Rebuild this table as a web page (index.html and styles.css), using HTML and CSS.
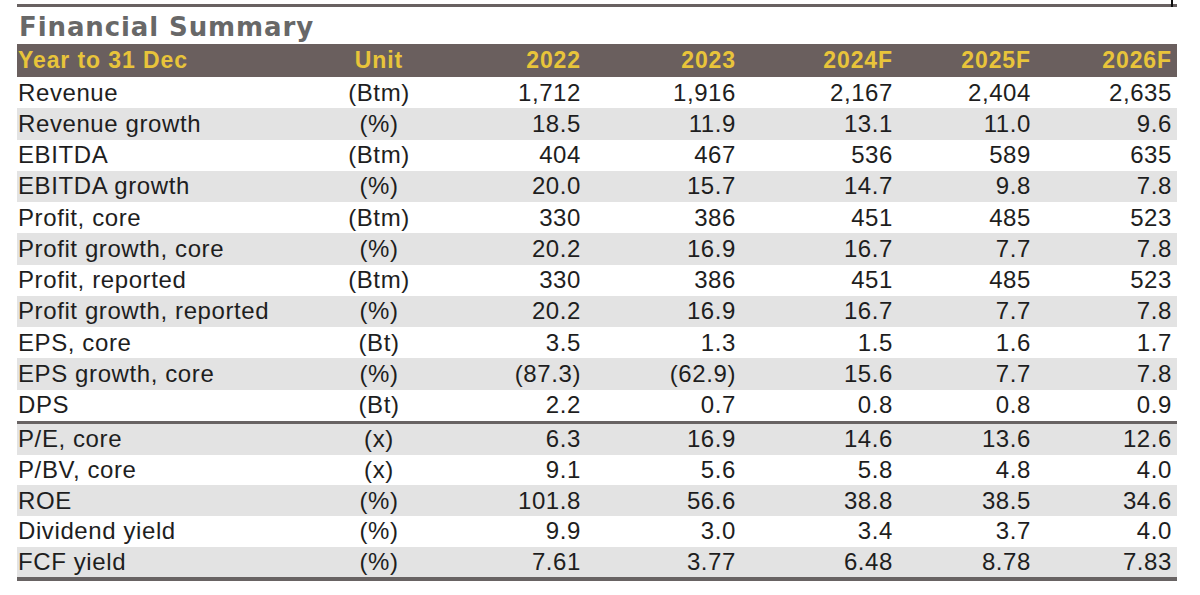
FILE: index.html
```html
<!DOCTYPE html>
<html lang="en">
<head>
<meta charset="utf-8">
<title>Financial Summary</title>
<link rel="stylesheet" href="styles.css">
</head>
<body>
<div class="sheet">
  <div class="topline"><span class="tick"></span></div>
  <div class="title">Financial Summary</div>
  <div class="row head">
    <div class="c-label">Year to 31 Dec</div>
    <div class="c-unit">Unit</div>
    <div class="c-num">2022</div>
    <div class="c-num">2023</div>
    <div class="c-num">2024F</div>
    <div class="c-num">2025F</div>
    <div class="c-num">2026F</div>
  </div>
  <div class="group g1">
    <div class="row"><div class="c-label">Revenue</div><div class="c-unit">(Btm)</div><div class="c-num">1,712</div><div class="c-num">1,916</div><div class="c-num">2,167</div><div class="c-num">2,404</div><div class="c-num">2,635</div></div>
    <div class="row alt"><div class="c-label">Revenue growth</div><div class="c-unit">(%)</div><div class="c-num">18.5</div><div class="c-num">11.9</div><div class="c-num">13.1</div><div class="c-num">11.0</div><div class="c-num">9.6</div></div>
    <div class="row"><div class="c-label">EBITDA</div><div class="c-unit">(Btm)</div><div class="c-num">404</div><div class="c-num">467</div><div class="c-num">536</div><div class="c-num">589</div><div class="c-num">635</div></div>
    <div class="row alt"><div class="c-label">EBITDA growth</div><div class="c-unit">(%)</div><div class="c-num">20.0</div><div class="c-num">15.7</div><div class="c-num">14.7</div><div class="c-num">9.8</div><div class="c-num">7.8</div></div>
    <div class="row"><div class="c-label">Profit, core</div><div class="c-unit">(Btm)</div><div class="c-num">330</div><div class="c-num">386</div><div class="c-num">451</div><div class="c-num">485</div><div class="c-num">523</div></div>
    <div class="row alt"><div class="c-label">Profit growth, core</div><div class="c-unit">(%)</div><div class="c-num">20.2</div><div class="c-num">16.9</div><div class="c-num">16.7</div><div class="c-num">7.7</div><div class="c-num">7.8</div></div>
    <div class="row"><div class="c-label">Profit, reported</div><div class="c-unit">(Btm)</div><div class="c-num">330</div><div class="c-num">386</div><div class="c-num">451</div><div class="c-num">485</div><div class="c-num">523</div></div>
    <div class="row alt"><div class="c-label">Profit growth, reported</div><div class="c-unit">(%)</div><div class="c-num">20.2</div><div class="c-num">16.9</div><div class="c-num">16.7</div><div class="c-num">7.7</div><div class="c-num">7.8</div></div>
    <div class="row"><div class="c-label">EPS, core</div><div class="c-unit">(Bt)</div><div class="c-num">3.5</div><div class="c-num">1.3</div><div class="c-num">1.5</div><div class="c-num">1.6</div><div class="c-num">1.7</div></div>
    <div class="row alt"><div class="c-label">EPS growth, core</div><div class="c-unit">(%)</div><div class="c-num">(87.3)</div><div class="c-num">(62.9)</div><div class="c-num">15.6</div><div class="c-num">7.7</div><div class="c-num">7.8</div></div>
    <div class="row"><div class="c-label">DPS</div><div class="c-unit">(Bt)</div><div class="c-num">2.2</div><div class="c-num">0.7</div><div class="c-num">0.8</div><div class="c-num">0.8</div><div class="c-num">0.9</div></div>
  </div>
  <div class="group g2">
    <div class="row alt"><div class="c-label">P/E, core</div><div class="c-unit">(x)</div><div class="c-num">6.3</div><div class="c-num">16.9</div><div class="c-num">14.6</div><div class="c-num">13.6</div><div class="c-num">12.6</div></div>
    <div class="row"><div class="c-label">P/BV, core</div><div class="c-unit">(x)</div><div class="c-num">9.1</div><div class="c-num">5.6</div><div class="c-num">5.8</div><div class="c-num">4.8</div><div class="c-num">4.0</div></div>
    <div class="row alt"><div class="c-label">ROE</div><div class="c-unit">(%)</div><div class="c-num">101.8</div><div class="c-num">56.6</div><div class="c-num">38.8</div><div class="c-num">38.5</div><div class="c-num">34.6</div></div>
    <div class="row"><div class="c-label">Dividend yield</div><div class="c-unit">(%)</div><div class="c-num">9.9</div><div class="c-num">3.0</div><div class="c-num">3.4</div><div class="c-num">3.7</div><div class="c-num">4.0</div></div>
    <div class="row alt"><div class="c-label">FCF yield</div><div class="c-unit">(%)</div><div class="c-num">7.61</div><div class="c-num">3.77</div><div class="c-num">6.48</div><div class="c-num">8.78</div><div class="c-num">7.83</div></div>
  </div>
</div>
</body>
</html>
```
FILE: styles.css
```css
html, body {
  margin: 0;
  padding: 0;
  background: #ffffff;
}

.sheet {
  position: relative;
  margin-left: 17px;
  width: 1160px;
  padding-top: 4px;
  font-family: "Liberation Sans", Arial, sans-serif;
}

.topline {
  position: relative;
  height: 3px;
  background: #686161;
}

.tick {
  position: absolute;
  right: 4px;
  top: -4px;
  width: 2px;
  height: 7px;
  background: #111111;
}

.title {
  height: 37px;
  box-sizing: border-box;
  padding-top: 3px;
  padding-left: 2px;
  line-height: 34px;
  font-family: "DejaVu Sans", Verdana, sans-serif;
  font-weight: bold;
  font-size: 26px;
  letter-spacing: 0.9px;
  color: #686868;
}

.row {
  display: grid;
  grid-template-columns: 303px 118px 148px 155px 157px 138px 141px;
  align-items: center;
  height: 31.27px;
  font-size: 24px;
  letter-spacing: 0.6px;
  color: #1e1e1e;
  background: #ffffff;
}

.row.alt {
  background: #e3e3e3;
}

.row.head {
  height: 33px;
  background: #6a5f5e;
  color: #e8c43a;
  font-weight: bold;
  font-size: 23px;
  letter-spacing: 0.9px;
}

.c-label {
  padding-left: 1px;
  white-space: nowrap;
}

.c-unit {
  text-align: center;
}

.c-num {
  text-align: right;
  padding-right: 5px;
}

.g1 {
  border-bottom: 3px solid #686363;
}

.g2 .row {
  height: 30.7px;
}

.g2 {
  border-bottom: 4px solid #686363;
}
```
